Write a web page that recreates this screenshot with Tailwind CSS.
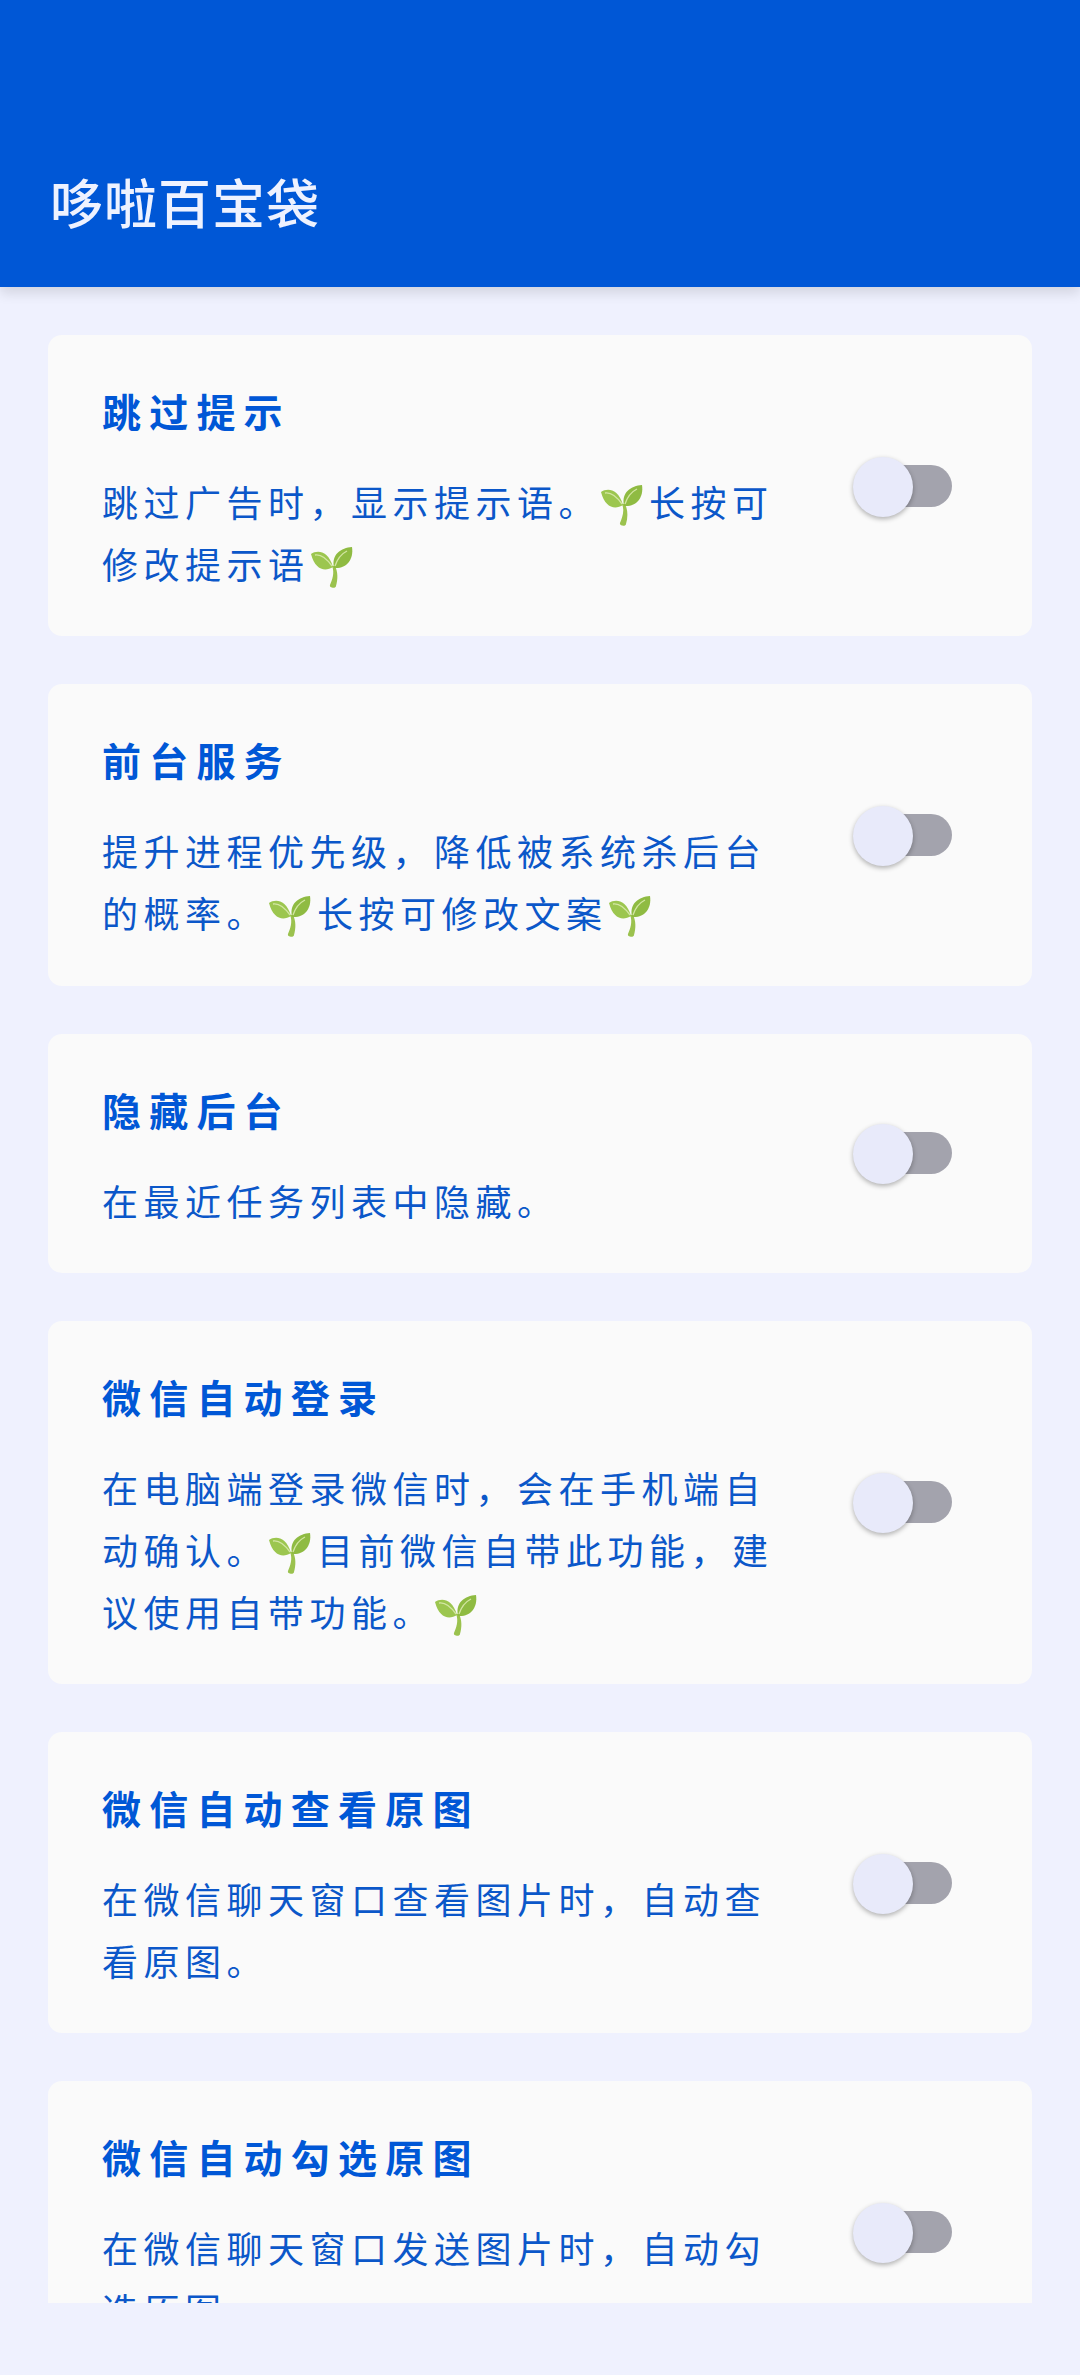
<!doctype html>
<html lang="zh-CN">
<head>
<meta charset="utf-8">
<script src="https://cdn.jsdelivr.net/npm/@tailwindcss/browser@4"></script>
</head>
<body class="w-[1080px] h-[2375px] overflow-hidden bg-[#eff1fe] font-['Roboto','Noto_Sans_CJK_SC',sans-serif]">
<svg class="hidden"><defs><symbol id="s" viewBox="0 0 44 44"><path d="M22 21C25 28 22 35 20 40c-1 3 6 4 6 1C28 34 28 27 25 21z" fill="#9bc24e"/><path d="M1 9C7 5 18 5 23 22C15 27 5 25 1 9z" fill="#9cc64f"/><path d="M42 2C31 3 21 9 24 23C36 24 44 15 42 2z" fill="#8fbb42"/><path d="M5 10C11 9 17 14 22 21M37 6C31 9 27 15 25 21" stroke="#d3e6a3" stroke-width="1.3" fill="none"/></symbol></defs></svg>
<header class="h-[287px] bg-[#0057d6] shadow-[0_6px_12px_rgba(0,0,0,0.12)] relative z-10 pl-[50px] pt-[172px]">
  <h1 class="text-[53px] leading-[68px] tracking-[1px] text-[#eef2ff] font-medium">哆啦百宝袋</h1>
</header>
<main class="h-[2016px] overflow-hidden px-[48px] pt-[48px] flex flex-col gap-[48px]">
  <section class="shrink-0 bg-[#fafafa] rounded-[14px] pl-[54px] pr-[80px] pt-[40px] pb-[38.3px] flex items-center justify-between">
    <div class="text-[#0b57c9]"><h2 class="text-[39px] leading-[79px] tracking-[8.2px] font-bold text-[#0057d6]">跳过提示</h2>
      <p class="mt-[20px] text-[36px] leading-[62px] tracking-[5.5px]">跳过广告时，显示提示语。<svg class="inline w-[44px] h-[44px] mr-[5px] align-[-10px]"><use href="#s"/></svg>长按可<br>修改提示语<svg class="inline w-[44px] h-[44px] align-[-10px]"><use href="#s"/></svg></p></div>
    <div class="relative w-[99px] h-[60px] shrink-0"><div class="absolute right-0 top-[8px] w-[70px] h-[42px] rounded-full bg-[#a3a3ad]"></div><div class="absolute left-0 top-0 w-[60px] h-[60px] rounded-full bg-[#e8eafa] shadow-[0_2px_5px_rgba(0,0,0,0.3)]"></div></div>
  </section>
  <section class="shrink-0 bg-[#fafafa] rounded-[14px] pl-[54px] pr-[80px] pt-[40px] pb-[38.3px] flex items-center justify-between">
    <div class="text-[#0b57c9]"><h2 class="text-[39px] leading-[79px] tracking-[8.2px] font-bold text-[#0057d6]">前台服务</h2>
      <p class="mt-[20px] text-[36px] leading-[62px] tracking-[5.5px]">提升进程优先级，降低被系统杀后台<br>的概率。<svg class="inline w-[44px] h-[44px] mr-[5px] align-[-10px]"><use href="#s"/></svg>长按可修改文案<svg class="inline w-[44px] h-[44px] align-[-10px]"><use href="#s"/></svg></p></div>
    <div class="relative w-[99px] h-[60px] shrink-0"><div class="absolute right-0 top-[8px] w-[70px] h-[42px] rounded-full bg-[#a3a3ad]"></div><div class="absolute left-0 top-0 w-[60px] h-[60px] rounded-full bg-[#e8eafa] shadow-[0_2px_5px_rgba(0,0,0,0.3)]"></div></div>
  </section>
  <section class="shrink-0 bg-[#fafafa] rounded-[14px] pl-[54px] pr-[80px] pt-[40px] pb-[38.3px] flex items-center justify-between">
    <div class="text-[#0b57c9]"><h2 class="text-[39px] leading-[79px] tracking-[8.2px] font-bold text-[#0057d6]">隐藏后台</h2>
      <p class="mt-[20px] text-[36px] leading-[62px] tracking-[5.5px]">在最近任务列表中隐藏。</p></div>
    <div class="relative w-[99px] h-[60px] shrink-0"><div class="absolute right-0 top-[8px] w-[70px] h-[42px] rounded-full bg-[#a3a3ad]"></div><div class="absolute left-0 top-0 w-[60px] h-[60px] rounded-full bg-[#e8eafa] shadow-[0_2px_5px_rgba(0,0,0,0.3)]"></div></div>
  </section>
  <section class="shrink-0 bg-[#fafafa] rounded-[14px] pl-[54px] pr-[80px] pt-[40px] pb-[38.3px] flex items-center justify-between">
    <div class="text-[#0b57c9]"><h2 class="text-[39px] leading-[79px] tracking-[8.2px] font-bold text-[#0057d6]">微信自动登录</h2>
      <p class="mt-[20px] text-[36px] leading-[62px] tracking-[5.5px]">在电脑端登录微信时，会在手机端自<br>动确认。<svg class="inline w-[44px] h-[44px] mr-[5px] align-[-10px]"><use href="#s"/></svg>目前微信自带此功能，建<br>议使用自带功能。<svg class="inline w-[44px] h-[44px] align-[-10px]"><use href="#s"/></svg></p></div>
    <div class="relative w-[99px] h-[60px] shrink-0"><div class="absolute right-0 top-[8px] w-[70px] h-[42px] rounded-full bg-[#a3a3ad]"></div><div class="absolute left-0 top-0 w-[60px] h-[60px] rounded-full bg-[#e8eafa] shadow-[0_2px_5px_rgba(0,0,0,0.3)]"></div></div>
  </section>
  <section class="shrink-0 bg-[#fafafa] rounded-[14px] pl-[54px] pr-[80px] pt-[40px] pb-[38.3px] flex items-center justify-between">
    <div class="text-[#0b57c9]"><h2 class="text-[39px] leading-[79px] tracking-[8.2px] font-bold text-[#0057d6]">微信自动查看原图</h2>
      <p class="mt-[20px] text-[36px] leading-[62px] tracking-[5.5px]">在微信聊天窗口查看图片时，自动查<br>看原图。</p></div>
    <div class="relative w-[99px] h-[60px] shrink-0"><div class="absolute right-0 top-[8px] w-[70px] h-[42px] rounded-full bg-[#a3a3ad]"></div><div class="absolute left-0 top-0 w-[60px] h-[60px] rounded-full bg-[#e8eafa] shadow-[0_2px_5px_rgba(0,0,0,0.3)]"></div></div>
  </section>
  <section class="shrink-0 bg-[#fafafa] rounded-[14px] pl-[54px] pr-[80px] pt-[40px] pb-[38.3px] flex items-center justify-between">
    <div class="text-[#0b57c9]"><h2 class="text-[39px] leading-[79px] tracking-[8.2px] font-bold text-[#0057d6]">微信自动勾选原图</h2>
      <p class="mt-[20px] text-[36px] leading-[62px] tracking-[5.5px]">在微信聊天窗口发送图片时，自动勾<br>选原图。</p></div>
    <div class="relative w-[99px] h-[60px] shrink-0"><div class="absolute right-0 top-[8px] w-[70px] h-[42px] rounded-full bg-[#a3a3ad]"></div><div class="absolute left-0 top-0 w-[60px] h-[60px] rounded-full bg-[#e8eafa] shadow-[0_2px_5px_rgba(0,0,0,0.3)]"></div></div>
  </section>
</main>
</body>
</html>
